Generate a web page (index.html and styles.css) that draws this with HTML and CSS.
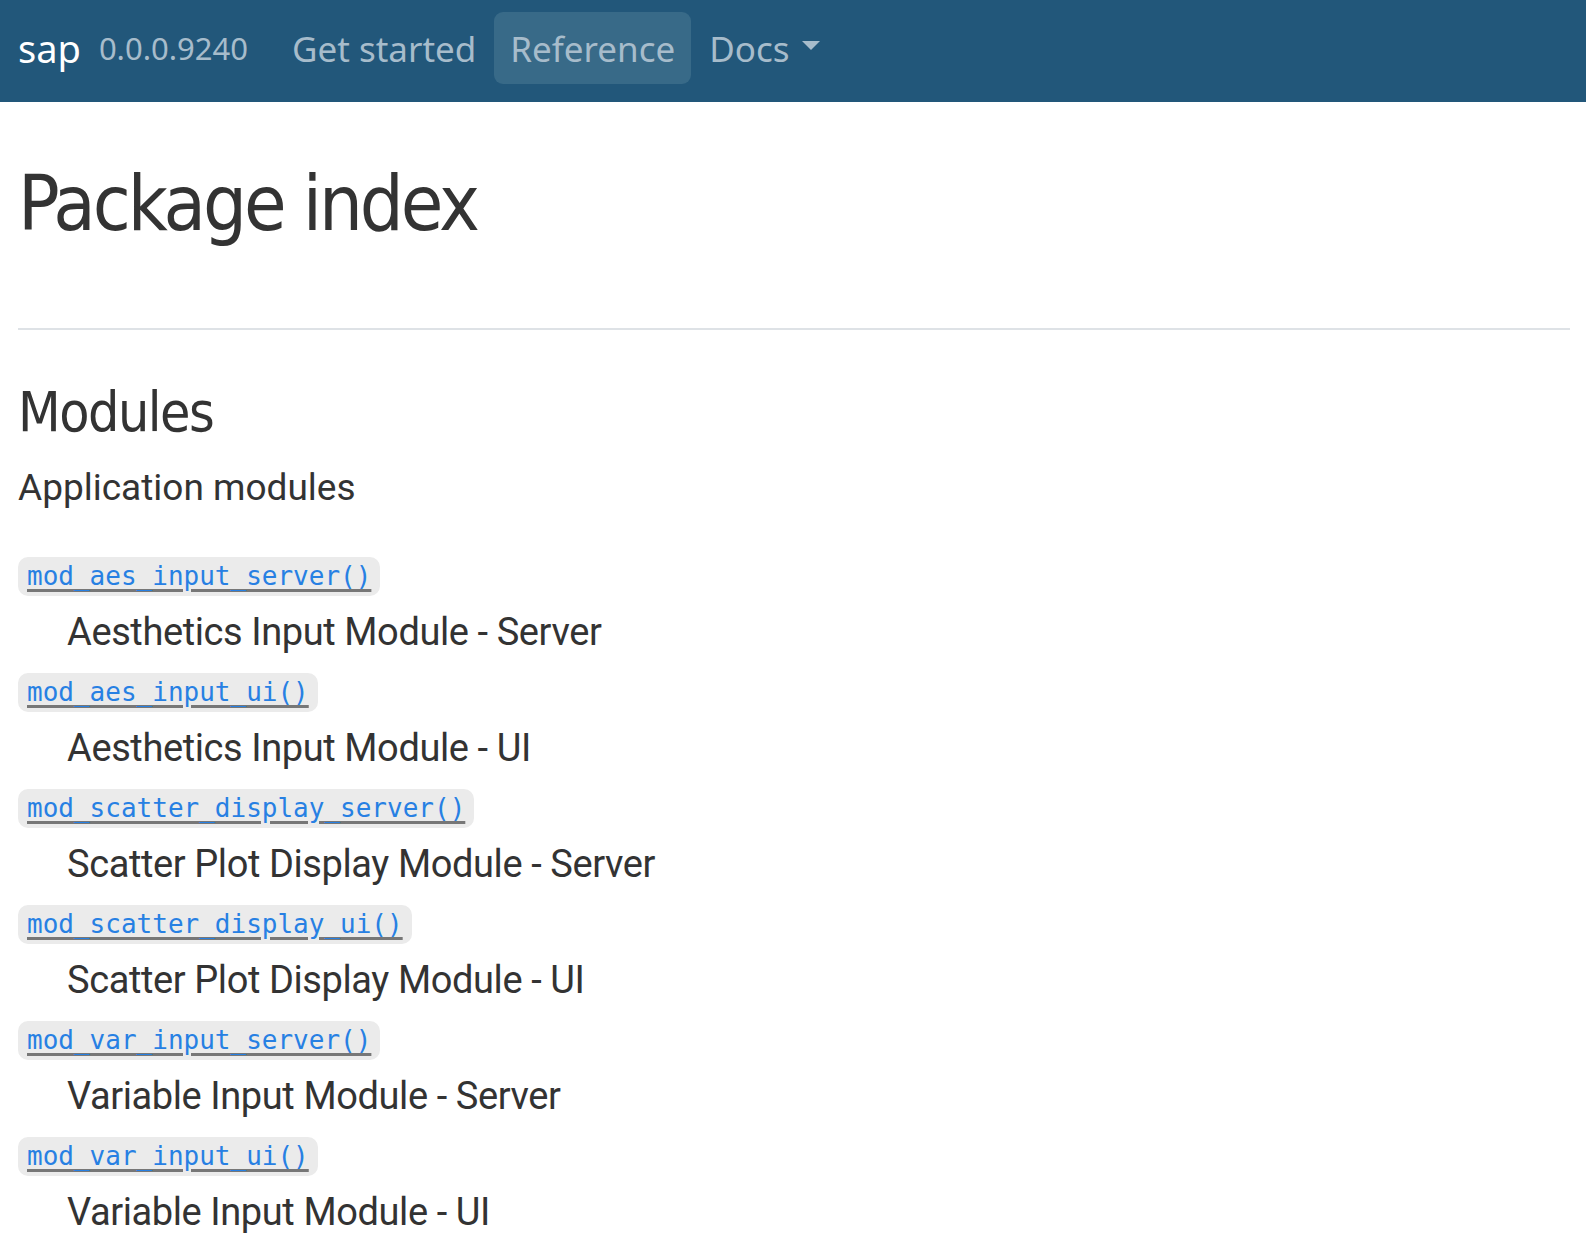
FILE: index.html
```html
<!DOCTYPE html>
<html lang="en">
<head>
<meta charset="utf-8">
<title>Package index • sap</title>
<link rel="stylesheet" href="styles.css">
</head>
<body>
<nav class="navbar">
  <a class="brand" href="#">sap</a>
  <span class="version">0.0.0.9240</span>
  <ul class="nav">
    <li><a class="nav-link" href="#">Get started</a></li>
    <li><a class="nav-link active" href="#">Reference</a></li>
    <li><a class="nav-link dropdown" href="#">Docs<span class="caret"></span></a></li>
  </ul>
</nav>
<main class="container">
  <h1>Package index</h1>
  <hr class="rule">
  <section class="section">
    <h2>Modules</h2>
    <p class="section-desc">Application modules</p>
    <dl class="ref-list">
      <dt><code><a href="#">mod_aes_input_server()</a></code></dt>
      <dd>Aesthetics Input Module - Server</dd>
      <dt><code><a href="#">mod_aes_input_ui()</a></code></dt>
      <dd>Aesthetics Input Module - UI</dd>
      <dt><code><a href="#">mod_scatter_display_server()</a></code></dt>
      <dd>Scatter Plot Display Module - Server</dd>
      <dt><code><a href="#">mod_scatter_display_ui()</a></code></dt>
      <dd>Scatter Plot Display Module - UI</dd>
      <dt><code><a href="#">mod_var_input_server()</a></code></dt>
      <dd>Variable Input Module - Server</dd>
      <dt><code><a href="#">mod_var_input_ui()</a></code></dt>
      <dd>Variable Input Module - UI</dd>
    </dl>
  </section>
</main>
</body>
</html>
```

FILE: styles.css
```css
html, body {
  margin: 0;
  padding: 0;
  background: #ffffff;
}

body {
  font-family: Roboto, "Noto Sans", sans-serif;
  color: #333333;
}

.navbar {
  display: flex;
  align-items: center;
  height: 102px;
  padding: 0 18px 6px 18px;
  background: #22577a;
  box-sizing: border-box;
  font-family: "Noto Sans", "Open Sans", sans-serif;
}

.brand {
  color: #ffffff;
  text-decoration: none;
  font-size: 38px;
  margin-right: 18px;
}

.version {
  color: #a7bccb;
  font-size: 31px;
  margin-right: 28px;
}

.nav {
  display: flex;
  align-items: center;
  list-style: none;
  margin: 0;
  padding: 0;
  gap: 2px;
}

.nav-link {
  display: flex;
  align-items: center;
  height: 72px;
  padding: 0 16px;
  border-radius: 9px;
  color: #a7bccb;
  text-decoration: none;
  font-size: 35px;
}

.nav-link.active {
  background: #386a88;
}

.caret {
  display: inline-block;
  margin-left: 12px;
  border-top: 9px solid #a7bccb;
  border-left: 9px solid transparent;
  border-right: 9px solid transparent;
  margin-top: -6px;
}

.container {
  padding: 0 16px 0 18px;
}

h1, h2 {
  font-family: "DejaVu Sans Condensed", Roboto, sans-serif;
  font-weight: 400;
  color: #333;
}

h1 {
  font-size: 77px;
  letter-spacing: -3px;
  line-height: 102px;
  margin: 51px 0 0 0;
}

.rule {
  border: 0;
  border-top: 2px solid #dee2e6;
  margin: 73px 0 0 0;
}

h2 {
  font-size: 55px;
  letter-spacing: -1.5px;
  line-height: 72px;
  margin: 46px 0 0 0;
}

.section-desc {
  font-size: 37px;
  line-height: 48px;
  margin: 16px 0 0 0;
}

.ref-list {
  margin: 45px 0 0 0;
}

.ref-list dt {
  margin: 0;
  line-height: 39px;
}

.ref-list code {
  display: inline-block;
  font-family: "DejaVu Sans Mono", "Liberation Mono", monospace;
  font-size: 26px;
  line-height: 39px;
  padding: 0 9px;
  background: #ebebeb;
  border-radius: 10px;
  vertical-align: top;
}

.ref-list code a {
  color: #2780e3;
  text-decoration: underline;
  text-decoration-color: #777777;
  text-decoration-thickness: 3px;
  text-underline-offset: 4px;
}

.ref-list dd {
  margin: 12px 0 17px 49px;
  font-size: 38px;
  letter-spacing: -0.4px;
  line-height: 48px;
}
```
